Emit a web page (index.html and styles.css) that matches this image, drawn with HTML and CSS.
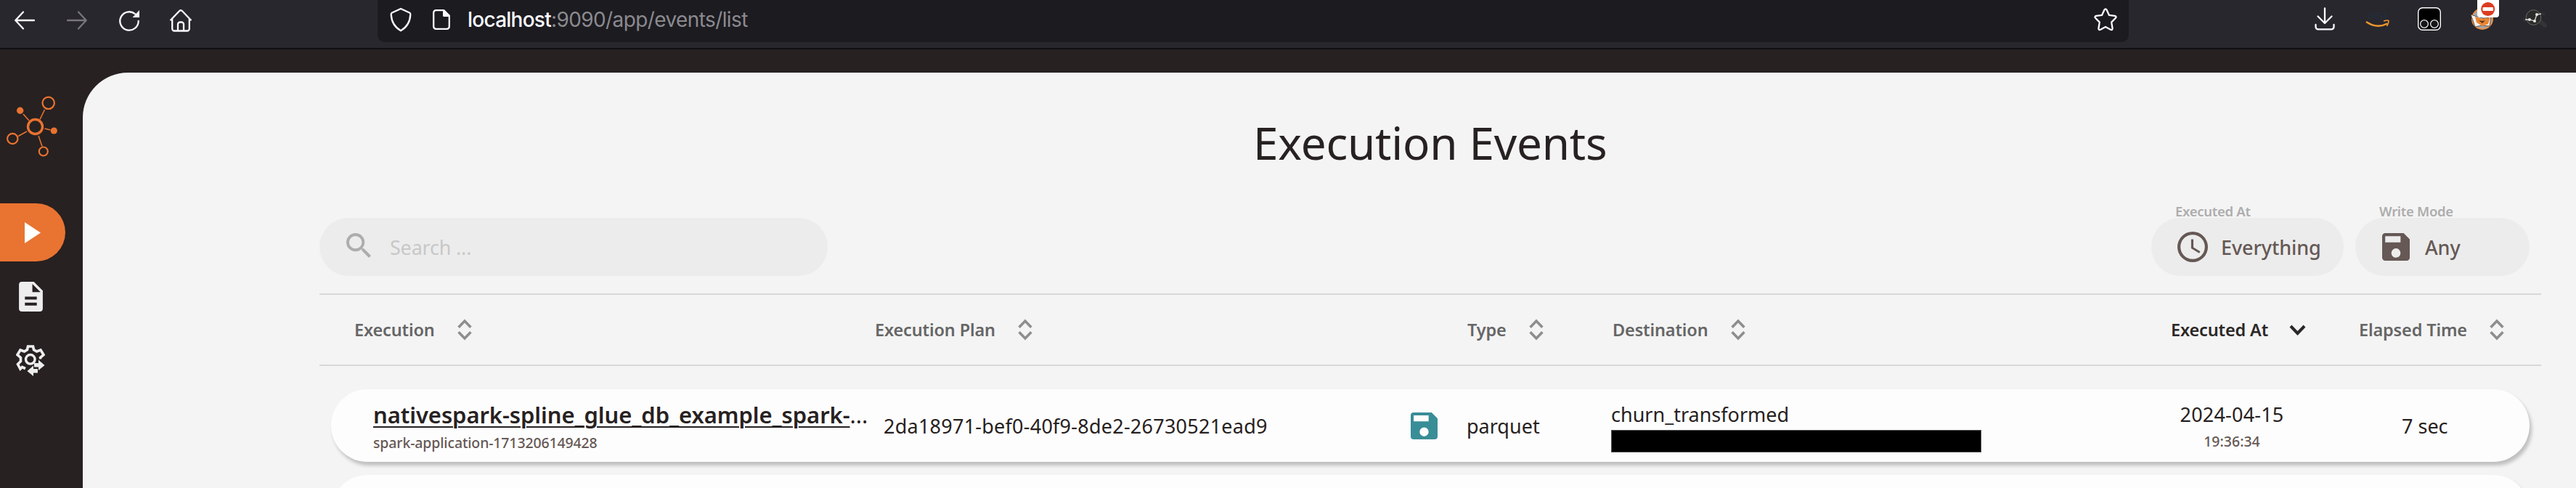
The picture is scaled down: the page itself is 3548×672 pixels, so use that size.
FILE: index.html
```html
<!DOCTYPE html>
<html lang="en">
<head>
<meta charset="utf-8">
<title>Execution Events</title>
<link rel="stylesheet" href="styles.css">
</head>
<body>
<svg class="defs" aria-hidden="true">
  <symbol id="sort" viewBox="0 0 20 30"><path d="M1.600 11.800 10 3l8.400 8.800M1.600 18.200 10 27l8.400-8.800" fill="none" stroke="currentColor" stroke-width="3.600"/></symbol>
  <symbol id="save" viewBox="3 3 18 18"><path fill="currentColor" d="M17 3H5a2 2 0 0 0-2 2v14a2 2 0 0 0 2 2h14a2 2 0 0 0 2-2V7l-4-4zm-5 16a3 3 0 1 1 0-6 3 3 0 0 1 0 6zm3-10H5V5h10v4z"/></symbol>
</svg>
<header class="toolbar">
  <nav class="nav">
    <svg width="28" height="28" viewBox="0 0 28 28" class="line"><path d="M27 14H1.500M12 2.500 1.300 14 12 25.500"/></svg>
    <svg width="28" height="28" viewBox="0 0 28 28" class="line dim"><path d="M1 14h25.500M16 2.500 26.700 14 16 25.500"/></svg>
    <svg width="28" height="30" viewBox="0 0 28 30" class="line"><path d="M26.700 16A12.700 12.700 0 1 1 22 6.100"/><path d="M28 1v10H18.500z" fill="currentColor" stroke="none"/></svg>
    <svg width="30" height="32" viewBox="0 0 30 32" class="line"><path d="M1.200 15.500 13.200 3q1.800-1.600 3.600 0l12 12.500M3.200 14v13.500a3 3 0 0 0 3 3h17.600a3 3 0 0 0 3-3V14M11 30v-8.500a3 3 0 0 1 3-3h2a3 3 0 0 1 3 3V30"/></svg>
  </nav>
  <div class="urlbar">
    <svg width="30" height="34" viewBox="0 0 30 34" class="line"><path d="M15 2 27 7.500q1.500.8 1.300 2.600Q27.500 25 15 32.300 2.500 25 1.700 10.100 1.500 8.300 3 7.500z"/></svg>
    <svg width="24" height="28" viewBox="0 0 24 28" class="line page"><path d="M15.500 1.200H4.500a3.300 3.300 0 0 0-3.300 3.300v19a3.300 3.300 0 0 0 3.300 3.300h15a3.300 3.300 0 0 0 3.300-3.300V8.500z"/><path d="M14 1v7.500q0 1.500 1.500 1.500H23V8.500L16 1z" fill="currentColor" stroke="none"/></svg>
    <span class="url"><b>localhost</b>:9090/app/events/list</span>
    <svg width="32" height="32" viewBox="0 0 32 32" class="line star"><path d="M14.300 2.700q1.700-2.500 3.400 0l3.300 7.200 7.900 1q2.700.8 1 2.900l-5.700 5.800 1.400 8.600q-.1 2.600-2.700 1.600L16 25.900l-6.900 3.900q-2.600 1-2.700-1.600l1.400-8.600-5.700-5.800q-1.700-2.100 1-2.900l7.900-1z"/></svg>
  </div>
  <div class="extensions">
    <svg width="28" height="32" viewBox="0 0 28 32" class="line"><path d="M14 1.500V22M4.500 12.500 14 22l9.500-9.500M1.500 24v3a3.300 3.300 0 0 0 3.300 3.300h18.400a3.300 3.300 0 0 0 3.300-3.300v-3"/></svg>
    <svg class="cloud" width="34" height="36" viewBox="0 -8 34 36"><text x="3" y="14" class="logo-text">aea</text><path d="M1 18q15 10 29 2.500" fill="none" stroke="#f49a2b" stroke-width="2.400"/><path d="M25 17q7-2 7 0t-2.500 7" fill="none" stroke="#f49a2b" stroke-width="1.600"/></svg>
    <svg width="32" height="32" viewBox="0 0 32 32"><rect x=".7" y=".7" width="30.600" height="30.600" rx="6" fill="#000" stroke="#fff" stroke-width="1.400"/><g fill="#16161a" stroke="#eee" stroke-width="1.300"><circle cx="9" cy="23" r="5.400"/><circle cx="23" cy="23" r="5.400"/></g></svg>
    <svg width="40" height="42" viewBox="0 0 40 42"><circle cx="17" cy="26" r="14" fill="#a3a6a8" stroke="#e98f47" stroke-width="2"/><path d="m1 20 9 3 10 3 9-3-2 13-11-1-9 2-3-9z" fill="#f3f3f0" stroke="#3d3936" stroke-width=".8"/><path d="m7 23 10 3 11-2-3 9-8 3-8-5z" fill="#eb8531"/><path d="m12 28 5 1 4-1-4 4z" fill="#49342a"/><rect x="10" y="-4" width="30" height="28" rx="4" fill="#fff"/><circle cx="24.700" cy="12.500" r="9.500" fill="#dc3c22"/><rect x="17.500" y="10" width="14.500" height="5" rx="1" fill="#fff"/></svg>
    <svg width="34" height="28" viewBox="0 0 34 28"><path d="m24 17 7 6" stroke="#343434" stroke-width="6" stroke-linecap="round"/><circle cx="3" cy="15" r="2.500" fill="#303030"/><circle cx="29" cy="7" r="2.500" fill="#303030"/><circle cx="15.500" cy="12" r="10.300" fill="#2b2b2a" stroke="#686863"/><path d="M4 15h6l7 2 3-9 6-1" fill="none" stroke="#ddd" stroke-width="1.300"/><g fill="#e4e4e4"><circle cx="10" cy="15" r="2"/><circle cx="17" cy="17" r="2"/><circle cx="20" cy="8" r="2"/></g></svg>
  </div>
</header>
<div class="app">
  <aside class="sidebar">
    <svg class="brand" width="70" height="86" viewBox="0 0 70 86" fill="none" stroke="#e97331"><g stroke-width="1.600"><path d="m23 25 8 9M52.500 19 46 32.500M52.500 45l8 2M28 49 16 55.500M44 55l5 14.500"/></g><circle cx="39.500" cy="42.500" r="10" stroke-width="3.400"/><circle cx="57.700" cy="9.800" r="8.200" stroke-width="2.200"/><circle cx="8.300" cy="59" r="7.200" stroke-width="2.200"/><circle cx="50.800" cy="76.500" r="6" stroke-width="2.200"/><g fill="#e97331" stroke="none"><circle cx="18.700" cy="20.300" r="4.700"/><circle cx="65.300" cy="48" r="4.600"/></g></svg>
    <a class="side active"><svg width="22" height="29" viewBox="0 0 22 29"><path d="M0 0v29l22-14.500z" fill="#fff"/></svg></a>
    <a class="side"><svg width="33" height="41" viewBox="4 2 16 20"><path fill="#ededed" d="M14 2H6a2 2 0 0 0-2 2v16a2 2 0 0 0 2 2h12a2 2 0 0 0 2-2V8l-6-6zm2 16H8v-2h8v2zm0-4H8v-2h8v2zm-3-5V3.500L18.500 9H13z"/></svg></a>
    <a class="side gear"><svg width="40" height="43" viewBox="0 0 40 43"><g fill="none" stroke="#ededed"><path stroke-width="3.600" d="M13 32.500 8.500 30.500 6 33 2.500 26.500 6.500 22.500V17.500L2 13.500 6 7l5.500 2 4-2.500 1-4.500h7l1 4.500 4 2.500L34 7l4 6.500-4.500 4 .3 2"/><circle cx="19.800" cy="19.800" r="6.300" stroke-width="3.400"/></g><path d="M40 28 21.500 43H14l18-24z" fill="#272121"/><path fill="#ededed" d="M31 20.500 39.500 28 31 35v-4.500h-6v-5.500h6zM24 28.500 15.500 36l8.500 7v-4.500h6v-5.500h-6z"/></svg></a>
  </aside>
  <main class="panel">
    <h1>Execution Events</h1>
    <section class="content">
      <div class="filters">
        <div class="search">
          <svg width="34" height="34" viewBox="3 3 17.500 17.500"><path fill="#adadad" d="M15.500 14h-.79l-.28-.27A6.470 6.470 0 0 0 16 9.500 6.500 6.500 0 1 0 9.500 16c1.610 0 3.090-.59 4.230-1.570l.27.280v.79l5 4.990L20.490 19l-4.990-5zm-6 0a4.500 4.500 0 1 1 0-9 4.500 4.500 0 0 1 0 9z"/></svg>
          <span>Search ...</span>
        </div>
        <div class="filter when"><label>Executed At</label>
          <div class="pill"><svg width="42" height="42" viewBox="2 2 20 20"><path fill="currentColor" d="M12 2a10 10 0 1 0 0 20 10 10 0 0 0 0-20zm0 18a8 8 0 1 1 0-16 8 8 0 0 1 0 16zm.5-13H11v6l5.250 3.150.75-1.230-4.500-2.670V7z"/></svg><span>Everything</span></div>
        </div>
        <div class="filter mode"><label>Write Mode</label>
          <div class="pill"><svg width="38" height="38"><use href="#save"/></svg><span>Any</span></div>
        </div>
      </div>
      <div class="thead">
        <div><span>Execution</span><svg class="sort"><use href="#sort"/></svg></div>
        <div><span>Execution Plan</span><svg class="sort"><use href="#sort"/></svg></div>
        <div><span>Type</span><svg class="sort"><use href="#sort"/></svg></div>
        <div><span>Destination</span><svg class="sort"><use href="#sort"/></svg></div>
        <div class="sorted"><span>Executed At</span><svg class="desc" viewBox="0 0 23 15"><path d="m2 2 9.500 10L21 2" fill="none" stroke="currentColor" stroke-width="4"/></svg></div>
        <div><span>Elapsed Time</span><svg class="sort"><use href="#sort"/></svg></div>
      </div>
      <div class="rows">
        <article class="row">
          <div class="cell"><div class="name"><a>nativespark-spline_glue_db_example_spark-</a><i>...</i></div><div class="sub">spark-application-1713206149428</div></div>
          <div class="plan">2da18971-bef0-40f9-8de2-26730521ead9</div>
          <svg class="disk" width="37" height="37"><use href="#save"/></svg>
          <div class="type">parquet</div>
          <div class="cell"><div class="dest">churn_transformed</div><div class="redacted"></div></div>
          <div class="cell date"><div>2024-04-15</div><div class="time">19:36:34</div></div>
          <div class="elapsed">7 sec</div>
        </article>
        <article class="row"></article>
      </div>
    </section>
  </main>
</div>
</body>
</html>
```
FILE: styles.css
```css
* { box-sizing: border-box; }
body { margin: 0; width: 3548px; height: 672px; overflow: hidden; background: #272121; font-family: "Noto Sans", "Open Sans", sans-serif; color: #272121; font-size: 27px; white-space: nowrap; }
svg { flex: none; display: block; }
.defs { display: none; }
.toolbar { height: 68px; background: #28272d; border-bottom: 2px solid #111013; display: flex; color: #fbfbfe; }
.line { fill: none; stroke: currentColor; stroke-width: 2.3; stroke-linecap: round; stroke-linejoin: round; }
.dim { color: #77767b; }
.nav { width: 520px; height: 55px; padding-left: 20px; display: flex; align-items: center; gap: 44px; }
.nav svg:last-child { margin-left: -2px; }
.urlbar { width: 2412px; height: 58px; padding: 0 16px 4px 17px; background: #1c1b20; border-radius: 0 0 10px 10px; display: flex; align-items: center; font: 28px/54px Inter, sans-serif; color: #fbfbfe; }
.urlbar .page { margin-left: 29px; }
.url { margin-left: 24px; letter-spacing: -0.6px; color: #8b8a8f; }
.url b { color: #fbfbfe; font-weight: 500; letter-spacing: -0.75px; }
.star { margin-left: auto; }
.extensions { height: 52px; margin-left: 256px; display: flex; align-items: center; }
.extensions svg:nth-child(2) { margin-left: 42px; margin-top: -8px; }
.extensions svg:nth-child(3) { margin-left: 38px; }
.extensions svg:nth-child(4) { margin: -10px 0 0 40px; }
.extensions svg:nth-child(5) { margin-left: 32px; }
.cloud { overflow: visible; }
.logo-text { font: 16px "Open Sans", sans-serif; fill: #222e3e; }
.app { display: flex; height: 604px; padding-top: 32px; }
.sidebar { width: 114px; padding-top: 32px; }
.brand { margin: 0 0 62px 9px; }
.side { display: flex; align-items: center; width: 90px; height: 80px; padding-left: 26px; margin-bottom: 8px; }
.side.active { background: #e97331; border-radius: 0 40px 40px 0; padding-left: 34px; }
.side.gear { padding-left: 22px; }
.panel { flex: 1; height: 572px; background: #f4f4f4; border-radius: 62px 0 0 0; overflow: hidden; }
h1 { margin: 66px 0 0; padding-left: 1612px; height: 116px; font-size: 62px; line-height: 60px; font-weight: 400; letter-spacing: -0.2px; }
.content { margin-left: 326px; width: 3060px; }
.filters { display: flex; align-items: flex-end; height: 98px; }
.search, .pill { height: 80px; border-radius: 40px; background: #ececec; display: flex; align-items: center; }
.search { width: 700px; padding-left: 37px; color: #c8c8c8; margin-right: 1823px; letter-spacing: -0.2px; }
.search svg { margin: -5px 26px 0 0; }
label { display: block; height: 18px; line-height: 18px; font-size: 18.5px; font-weight: 600; color: #adadad; padding-left: 33px; letter-spacing: -0.3px; }
.pill { color: #655855; }
.pill span { font-weight: 500; letter-spacing: -0.1px; }
.filter { margin-right: 16px; }
.when .pill { width: 265px; padding-left: 36px; gap: 18px; }
.mode .pill { width: 240px; padding-left: 37px; gap: 21px; }
.thead { margin-top: 24px; height: 100px; border: solid #d8d8d8; border-width: 2px 0; padding-left: 48px; display: grid; grid-template-columns: 717px 816px 200px 769px 259px 1fr; font-size: 23.5px; font-weight: 600; color: #666; letter-spacing: -0.15px; }
.thead div { display: flex; align-items: center; gap: 31px; }
.sort { width: 20px; height: 30px; color: #8e8e8e; }
.desc { width: 23px; height: 15px; }
.thead .sorted { color: #2b2727; gap: 29px; }
.rows { padding: 32px 16px 0; display: grid; gap: 18px; }
.row { height: 100px; border-radius: 50px; background: #fdfdfd; box-shadow: 3px 5px 5px rgba(0,0,0,.22); padding-left: 58px; display: grid; grid-template-columns: 703px 726px 77px 199px 743px 224px 1fr; align-items: center; }
.disk { color: #398d97; }
.plan { letter-spacing: 0.24px; font-weight: 450; }
.cell { align-self: start; padding-top: 13px; line-height: 44px; }
.name { font-size: 31px; font-weight: 600; display: flex; letter-spacing: -0.08px; }
.name a { text-decoration: underline; text-decoration-thickness: 1.5px; text-underline-offset: 4px; }
.name i { font-style: normal; font-weight: 400; }
.sub { font-size: 19.5px; line-height: 34px; color: #655855; font-weight: 500; letter-spacing: -0.14px; }
.redacted { width: 510px; height: 31px; margin-top: -1px; background: #000; border: 1px solid #555; }
.date { text-align: center; width: 224px; justify-self: center; letter-spacing: 0.2px; }
.time { font-size: 19.5px; line-height: 29px; color: #655855; font-weight: 500; letter-spacing: 0; }
.elapsed { padding-left: 122px; }
```
